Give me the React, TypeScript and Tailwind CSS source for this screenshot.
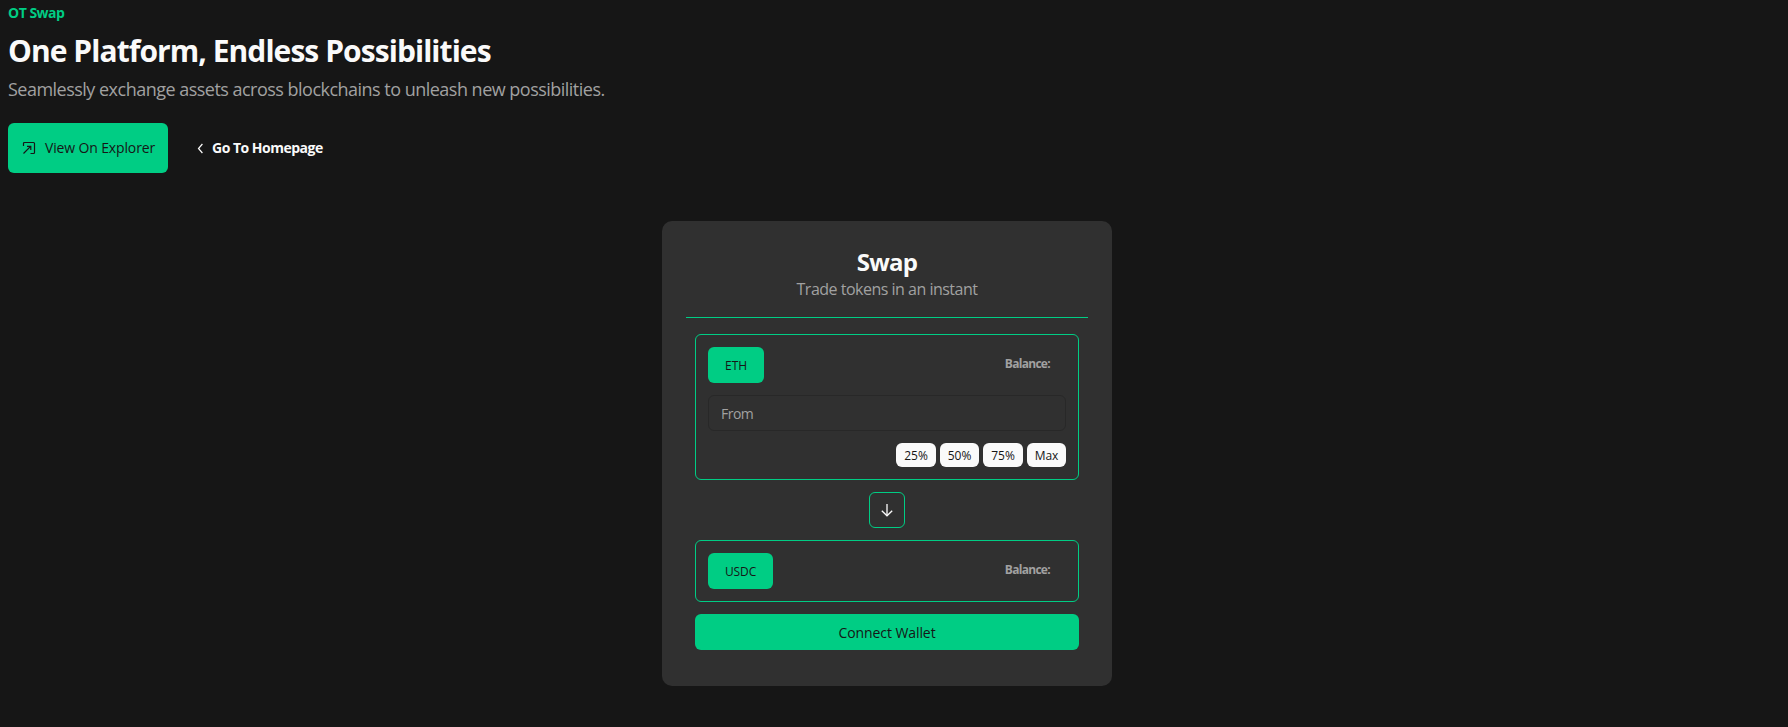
import type { ReactNode } from 'react';

function ExplorerIcon() {
  return (
    <svg width="15" height="15" viewBox="0 0 15 15" fill="none" stroke="currentColor" strokeWidth="1.2">
      <path d="M1.5 4.9V2.5Q1.5 1.5 2.5 1.5H11.5Q12.5 1.5 12.5 2.5V11.5Q12.5 12.5 11.5 12.5H8.5" />
      <path d="M1.5 12.5L8.6 5.4M5 5.3H8.8V9" />
    </svg>
  );
}

function ChevronLeftIcon() {
  return (
    <svg width="15" height="15" viewBox="0 0 15 15" fill="none" stroke="currentColor" strokeWidth="1.2">
      <path d="M9.4 3L5.5 7.5L9.4 12" />
    </svg>
  );
}

function ArrowDownIcon() {
  return (
    <svg width="16" height="16" viewBox="0 0 16 16" fill="none" stroke="currentColor" strokeWidth="1.3">
      <path d="M8 2V13.6" className="stroke-[#b4b4b4] stroke-2" />
      <path d="M2.8 8.8L8 13.8L13.2 8.8" />
    </svg>
  );
}

function TokenBox({ token, width, children }: { token: string; width: string; children?: ReactNode }) {
  return (
    <div className="flex flex-col gap-3 rounded-md border border-[#00cd84] p-3">
      <div className="flex items-center justify-between">
        <button
          className={`flex h-9 items-center justify-center rounded-md bg-[#00cd84] pt-[2px] text-xs tracking-[-0.1px] text-[#161616] ${width}`}
        >
          {token}
        </button>
        <span className="mr-4 pb-[3px] text-xs font-bold tracking-[-0.7px] text-[#a1a1a1]">Balance:</span>
      </div>
      {children}
    </div>
  );
}

const shares = [
  { label: '25%', width: 'w-10' },
  { label: '50%', width: 'w-[39px]' },
  { label: '75%', width: 'w-10' },
  { label: 'Max', width: 'w-[39px]' },
];

export default function App() {
  return (
    <div className="min-h-screen bg-[#161616] pr-[22px] pl-2 font-['Open_Sans','Noto_Sans',sans-serif] text-[#fafafa]">
      <header>
        <p className="pt-[3px] text-sm font-bold tracking-[-0.5px] text-[#00cd84]">OT Swap</p>
        <h1 className="mt-[10px] text-3xl leading-9 font-bold tracking-[-0.94px]">One Platform, Endless Possibilities</h1>
        <p className="mt-[6px] text-lg leading-7 tracking-[-0.515px] text-[#a1a1a1]">
          Seamlessly exchange assets across blockchains to unleash new possibilities.
        </p>
        <div className="mt-5 flex h-[50px] items-center">
          <button className="flex h-[50px] w-40 items-center gap-2 rounded-md bg-[#00cd84] pl-[14px] text-sm tracking-[-0.14px] whitespace-nowrap text-[#161616]">
            <ExplorerIcon />
            View On Explorer
          </button>
          <button className="ml-[25px] flex items-center gap-1 text-sm font-bold tracking-[-0.5px]">
            <ChevronLeftIcon />
            Go To Homepage
          </button>
        </div>
      </header>

      <main className="mx-auto mt-12 h-[465px] w-[450px] rounded-[10px] bg-[#303030] px-6 pt-[27px]">
        <div className="border-b border-[#00cd84] pb-4 text-center">
          <h2 className="text-2xl leading-7 font-bold tracking-[-0.7px]">Swap</h2>
          <p className="pt-px text-base leading-6 tracking-[-0.5px] text-[#a1a1a1]">Trade tokens in an instant</p>
        </div>
        <div className="mt-4 flex flex-col gap-3 px-[9px]">
          <TokenBox token="ETH" width="w-14">
            <input
              placeholder="From"
              className="h-9 rounded-md border border-[#282828] bg-transparent px-3 text-sm tracking-[-0.5px] outline-none placeholder:text-[#a1a1a1]"
            />
            <div className="flex justify-end gap-1">
              {shares.map((share) => (
                <button
                  key={share.label}
                  className={`flex h-6 items-center justify-center rounded-md bg-[#fafafa] pt-[2px] text-xs text-[#161616] ${share.width}`}
                >
                  {share.label}
                </button>
              ))}
            </div>
          </TokenBox>
          <button className="flex size-9 items-center justify-center self-center rounded-md border border-[#00cd84]">
            <ArrowDownIcon />
          </button>
          <TokenBox token="USDC" width="w-[65px]" />
          <button className="flex h-9 items-center justify-center rounded-md bg-[#00cd84] pt-[2px] text-sm tracking-[-0.08px] text-[#161616]">
            Connect Wallet
          </button>
        </div>
      </main>
    </div>
  );
}
